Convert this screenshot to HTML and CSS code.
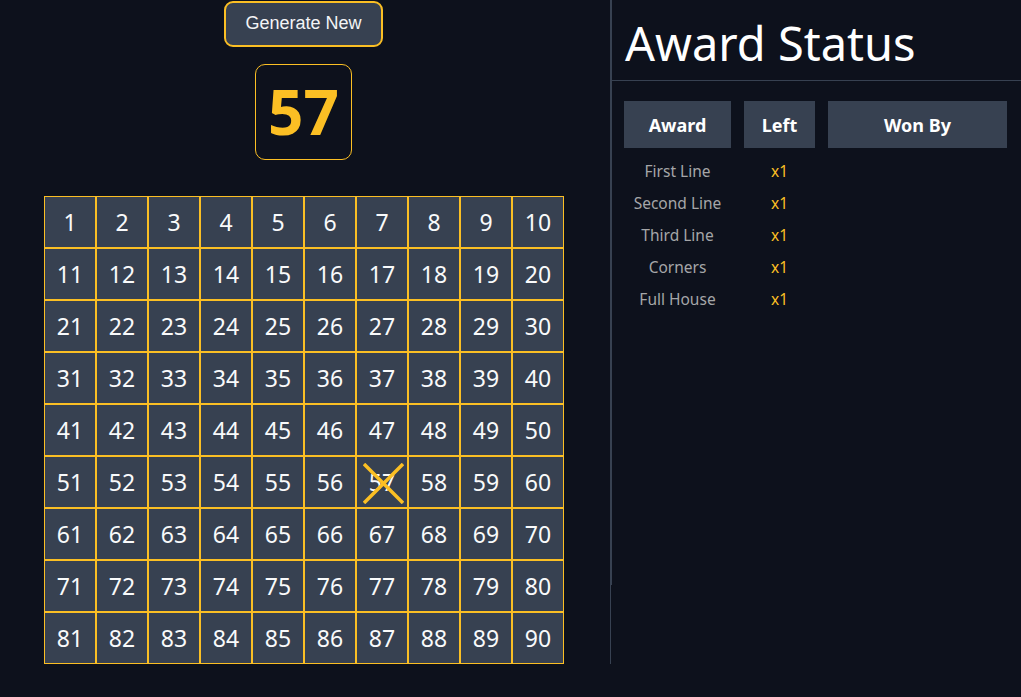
FILE: index.html
```html
<!DOCTYPE html>
<html lang="en">
<head>
<meta charset="utf-8">
<title>Bingo</title>
<link rel="stylesheet" href="styles.css">
</head>
<body>
<div class="app">
  <section class="caller">
    <button class="gen-btn" type="button">Generate New</button>
    <div class="current">57</div>
    <div class="board" id="board"></div>
  </section>
  <section class="awards">
    <header class="awards-head">
      <h1>Award Status</h1>
    </header>
    <div class="award-table">
      <div class="th">Award</div>
      <div class="th">Left</div>
      <div class="th">Won By</div>
    </div>
    <div class="award-rows">
      <div class="td name">First Line</div><div class="td left">x1</div><div class="td"></div>
      <div class="td name">Second Line</div><div class="td left">x1</div><div class="td"></div>
      <div class="td name">Third Line</div><div class="td left">x1</div><div class="td"></div>
      <div class="td name">Corners</div><div class="td left">x1</div><div class="td"></div>
      <div class="td name">Full House</div><div class="td left">x1</div><div class="td"></div>
    </div>
  </section>
</div>
<script>
  var board = document.getElementById('board');
  for (var i = 1; i <= 90; i++) {
    var c = document.createElement('div');
    c.className = 'cell' + (i === 57 ? ' called' : '');
    c.textContent = i;
    if (i === 57) {
      c.innerHTML = '57<svg class="cross" viewBox="0 0 41 41" width="41" height="41"><path d="M1 1 L40 40 M40 1 L1 40" stroke="#fbbf24" stroke-width="3.5" fill="none"/></svg>';
    }
    board.appendChild(c);
  }
</script>
</body>
</html>
```
FILE: styles.css
```css
html, body {
  margin: 0;
  padding: 0;
  background: #0d111c;
}
body {
  font-family: "Noto Sans", "Open Sans", sans-serif;
  color: #f3f4f6;
}
.app {
  display: flex;
  width: 1021px;
  height: 697px;
}
.caller {
  width: 610px;
  height: 664px;
  border-right: 1px solid #374151;
  display: flex;
  flex-direction: column;
  align-items: flex-start;
  box-sizing: content-box;
}
.gen-btn {
  margin: 1px 0 0 224px;
  height: 46px;
  width: 159px;
  box-sizing: border-box;
  background: #374151;
  border: 2px solid #fbbf24;
  border-radius: 9px;
  color: #f3f4f6;
  font-family: "Liberation Sans", Arial, sans-serif;
  font-size: 18px;
  padding: 0;
  cursor: pointer;
}
.current {
  margin: 17px 0 0 255px;
  width: 97px;
  height: 97px;
  box-sizing: border-box;
  border: 1px solid #fbbf24;
  border-radius: 10px;
  display: flex;
  align-items: center;
  justify-content: center;
  color: #fbbf24;
  font-weight: 700;
  font-size: 62px;
  line-height: 1;
  padding-bottom: 2px;
}
.board {
  margin: 36px 0 0 44px;
  display: grid;
  grid-template-columns: repeat(10, 52px);
  grid-auto-rows: 52px;
}
.cell {
  position: relative;
  box-sizing: border-box;
  background: #374151;
  border: 1px solid #fbbf24;
  display: flex;
  align-items: center;
  justify-content: center;
  font-size: 23px;
  color: #f9fafb;
}
.cross {
  position: absolute;
  left: 6px;
  top: 6px;
}
.awards {
  flex: 1;
  height: 585px;
  border-left: 1px solid #374151;
}
.awards-head {
  height: 80px;
  border-bottom: 1px solid #374151;
}
.awards-head h1 {
  margin: 0;
  padding: 14px 0 0 13px;
  font-weight: 400;
  font-size: 47px;
  line-height: 58px;
  color: #ffffff;
}
.award-table,
.award-rows {
  display: grid;
  grid-template-columns: 107px 71px 179px;
  column-gap: 13px;
  margin-left: 12px;
}
.award-table {
  margin-top: 20px;
}
.th {
  height: 47px;
  background: #374151;
  display: flex;
  align-items: center;
  justify-content: center;
  font-weight: 700;
  font-size: 18px;
  color: #ffffff;
}
.award-rows {
  margin-top: 7px;
  grid-auto-rows: 32px;
}
.td {
  display: flex;
  align-items: center;
  justify-content: center;
  font-size: 15.5px;
}
.td.name {
  color: #a5a6a8;
}
.td.left {
  color: #fbbf24;
}
```
